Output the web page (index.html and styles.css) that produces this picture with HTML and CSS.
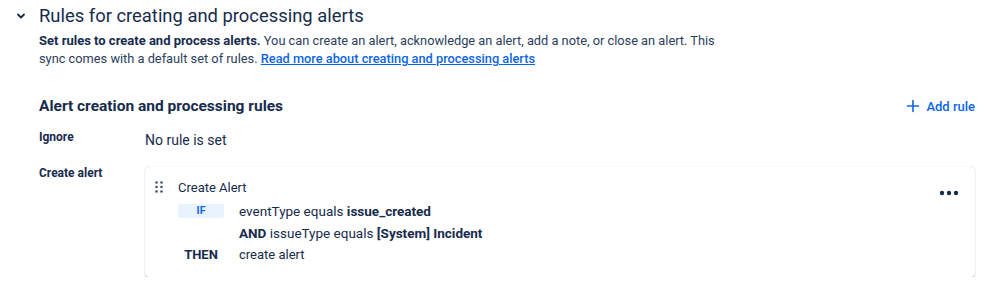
FILE: index.html
```html
<!DOCTYPE html>
<html lang="en">
<head>
  <meta charset="UTF-8" />
  <title>Alert rules</title>
  <link rel="stylesheet" href="styles.css">
</head>
<body>
  <div class="section">
    <div class="section-head">
      <span class="chevron">
        <svg width="12" height="12" viewBox="0 0 12 12"><path d="M3 4.5 L6 7.5 L9 4.5" fill="none" stroke="#172B4D" stroke-width="1.8" stroke-linecap="round" stroke-linejoin="round"/></svg>
      </span>
      <h1>Rules for creating and processing alerts</h1>
    </div>
    <div class="section-body">
      <p class="desc"><strong>Set rules to create and process alerts.</strong> You can create an alert, acknowledge an alert, add a note, or close an alert. This sync comes with a default set of rules. <a href="#">Read more about creating and processing alerts</a></p>

      <div class="rules-head">
        <h2>Alert creation and processing rules</h2>
        <button class="add-rule">
          <svg width="14" height="14" viewBox="0 0 14 14"><path d="M7 1.5 V12.5 M1.5 7 H12.5" stroke="#0C66E4" stroke-width="1.6" stroke-linecap="round"/></svg>
          Add rule
        </button>
      </div>

      <div class="rule-row">
        <div class="rule-label">Ignore</div>
        <div class="rule-empty">No rule is set</div>
      </div>

      <div class="rule-row">
        <div class="rule-label">Create alert</div>
        <div class="card">
          <div class="card-head">
            <span class="handle">
              <svg width="8" height="12" viewBox="0 0 8 12"><g fill="#44546F"><circle cx="1.5" cy="1.5" r="1.3"/><circle cx="6.5" cy="1.5" r="1.3"/><circle cx="1.5" cy="6" r="1.3"/><circle cx="6.5" cy="6" r="1.3"/><circle cx="1.5" cy="10.5" r="1.3"/><circle cx="6.5" cy="10.5" r="1.3"/></g></svg>
            </span>
            <span class="card-title">Create Alert</span>
            <span class="more">
              <svg width="20" height="6" viewBox="0 0 20 6"><g fill="#172B4D"><circle cx="3" cy="3" r="2.2"/><circle cx="10" cy="3" r="2.2"/><circle cx="17" cy="3" r="2.2"/></g></svg>
            </span>
          </div>
          <div class="conds">
            <div class="cond">
              <span class="badge">IF</span>
              <span class="cond-text">eventType equals <b>issue_created</b></span>
            </div>
            <div class="cond">
              <span class="cond-key"></span>
              <span class="cond-text"><b>AND</b> issueType equals <b>[System] Incident</b></span>
            </div>
            <div class="cond">
              <span class="cond-key then">THEN</span>
              <span class="cond-text plain">create alert</span>
            </div>
          </div>
        </div>
      </div>
    </div>
  </div>
</body>
</html>
```

FILE: styles.css
```css
body {
  font-family: Roboto, "Noto Sans", Arial, sans-serif;
  color: #172B4D;
  background: #fff;
  margin: 0;
  padding: 0;
}
.section {
  padding: 4px 24px 0 15px;
}
.section-head {
  display: flex;
  align-items: center;
  gap: 12px;
}
.chevron {
  display: flex;
  width: 12px;
  height: 12px;
}
h1 {
  font-size: 18.4px;
  font-weight: 400;
  margin: 0;
  line-height: 24px;
}
.section-body {
  padding-left: 24px;
}
.desc {
  font-size: 12.8px;
  line-height: 18px;
  margin: 4px 0 0;
  max-width: 686px;
  color: #2C3E5D;
}
.desc strong {
  color: #172B4D;
  font-size: 13px;
}
.desc a {
  color: #0C66E4;
  font-weight: 500;
}
.rules-head {
  display: flex;
  justify-content: space-between;
  align-items: center;
  margin-top: 26px;
}
h2 {
  font-size: 15.5px;
  font-weight: 700;
  margin: 0;
  line-height: 24px;
}
.add-rule {
  display: flex;
  align-items: center;
  gap: 6px;
  background: none;
  border: none;
  color: #0C66E4;
  font-family: Roboto, sans-serif;
  font-size: 13px;
  font-weight: 500;
  padding: 0;
}
.rule-row {
  display: flex;
  margin-top: 12px;
}
.rule-row + .rule-row {
  margin-top: 17px;
}
.rule-label {
  width: 106px;
  flex-shrink: 0;
  font-size: 12px;
  font-weight: 700;
  line-height: 14px;
}
.rule-empty {
  font-size: 14px;
  line-height: 18px;
  padding-top: 1px;
}
.card {
  flex: 1;
  margin-top: 1px;
  border-radius: 4px;
  box-shadow: 0 1px 1px rgba(9, 30, 66, 0.25), 0 0 1px rgba(9, 30, 66, 0.31);
  padding: 10px 16px 11px 10px;
}
.card-head {
  display: flex;
  align-items: center;
  height: 20px;
}
.handle {
  display: flex;
  width: 8px;
  margin-right: 15px;
}
.card-title {
  font-size: 13px;
  flex: 1;
}
.more {
  display: flex;
  margin-top: 12px;
}
.conds {
  margin-top: 3px;
  padding-left: 23px;
}
.cond {
  display: flex;
  align-items: center;
  font-size: 13px;
  line-height: 22px;
}
.cond-key, .badge {
  width: 46px;
  margin-right: 15px;
  flex-shrink: 0;
}
.badge {
  background: #E9F2FF;
  color: #0C66E4;
  border-radius: 3px;
  font-size: 10.5px;
  font-weight: 700;
  text-align: center;
  line-height: 14px;
}
.cond-key.then {
  text-align: center;
  font-weight: 700;
}
.cond-text {
  font-size: 13.5px;
}
.cond-text.plain {
  font-size: 13px;
}
.cond-text b {
  font-weight: 700;
}
```
